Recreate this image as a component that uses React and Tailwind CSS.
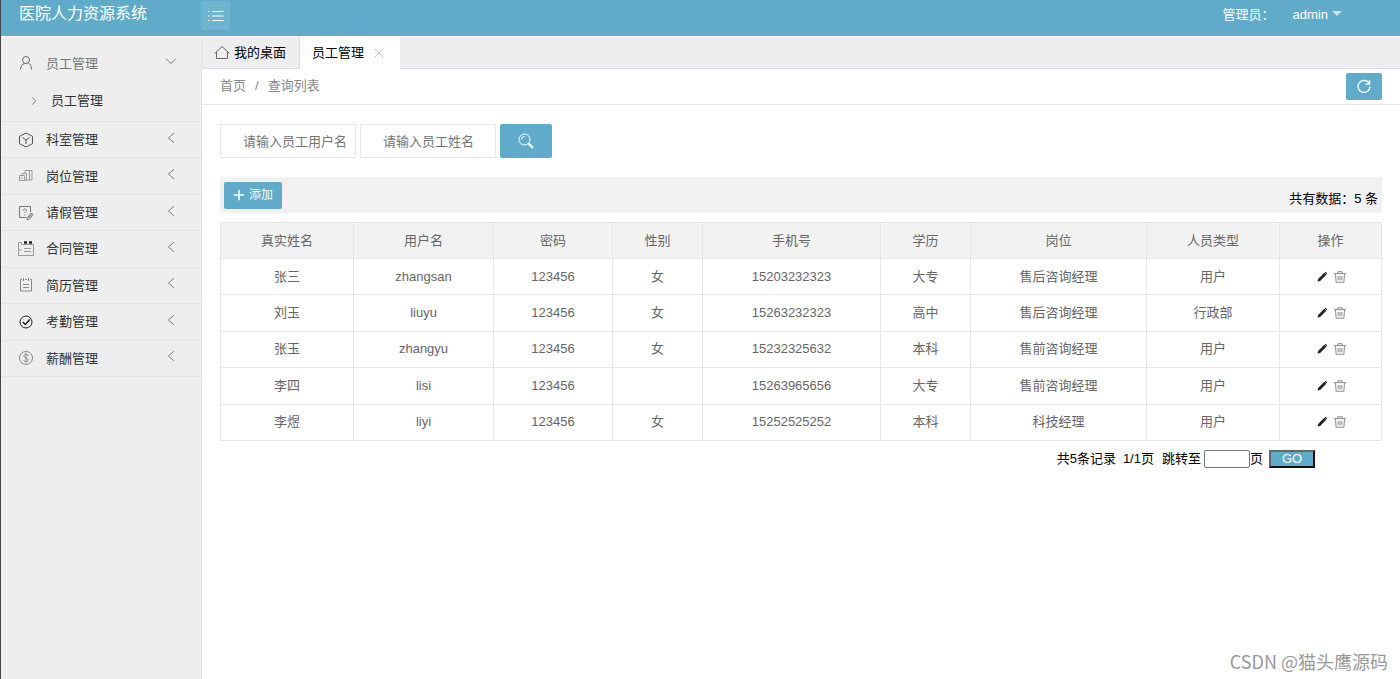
import React, { useState } from "react";

const menus = [
  { id: "dept", name: "科室管理" },
  { id: "post", name: "岗位管理" },
  { id: "leave", name: "请假管理" },
  { id: "contract", name: "合同管理" },
  { id: "resume", name: "简历管理" },
  { id: "attendance", name: "考勤管理" },
  { id: "salary", name: "薪酬管理" },
];

const columns = ["真实姓名", "用户名", "密码", "性别", "手机号", "学历", "岗位", "人员类型", "操作"];

const employees = [
  ["张三", "zhangsan", "123456", "女", "15203232323", "大专", "售后咨询经理", "用户"],
  ["刘玉", "liuyu", "123456", "女", "15263232323", "高中", "售后咨询经理", "行政部"],
  ["张玉", "zhangyu", "123456", "女", "15232325632", "本科", "售前咨询经理", "用户"],
  ["李四", "lisi", "123456", "", "15263965656", "大专", "售前咨询经理", "用户"],
  ["李煜", "liyi", "123456", "女", "15252525252", "本科", "科技经理", "用户"],
];

function Icon({ children, className = "size-4", width = 1 }) {
  return (
    <svg
      viewBox="0 0 16 16"
      className={className}
      fill="none"
      stroke="currentColor"
      strokeWidth={width}
      aria-hidden="true"
    >
      {children}
    </svg>
  );
}

function MenuIcon({ id }) {
  switch (id) {
    case "dept":
      return (
        <Icon className="size-4 text-[#555]">
          <path d="M8 1 14.5 4.3v7.4L8 15l-6.500-3.300V4.300zM4.500 5.500 8 8l3.500-2.500M8 8v4" />
        </Icon>
      );
    case "post":
      return (
        <Icon className="size-4 text-[#999]">
          <path d="M1.500 7.500h5v5h-5zM4 7.500v-2h4.500v7H6.500M3 10h2M7 5.500v-3h7v9.500H8.500M11.500 2.500v9.500" />
        </Icon>
      );
    case "leave":
      return (
        <Icon className="size-4 text-[#777]">
          <path d="M12.500 7V1.500h-11v11h7M5 5.500c0-2 3.500-2 3.500 0 0 1.300-1.700 1.300-1.700 2.500M6.800 9.500v1" />
          <path d="m9 13.500 4-5.500 2 1.500-4 5H9zM10.500 13l3-3.500" />
        </Icon>
      );
    case "contract":
      return (
        <Icon className="size-4 text-[#999]">
          <path d="M.5 1.500h3v2h12v11H.5zM1 9h3M6 7.500h7M6 10.500h7" />
          <path d="M6 1.500h3M11 1.500h3" stroke="#222" strokeWidth="2.5" />
        </Icon>
      );
    case "resume":
      return (
        <Icon className="size-4 text-[#888]">
          <path d="M4 2.500H2.500v11.500h11V2.500H12M7 2.500h2M5.500 1v3M10.500 1v3M5 7.500h6M5 10.500h6" />
        </Icon>
      );
    case "attendance":
      return (
        <Icon className="size-4 text-[#222]">
          <circle cx="8" cy="8" r="6" />
          <path d="m4.800 8 2.500 2.500 4.500-5" strokeWidth="1.5" />
        </Icon>
      );
    default:
      return (
        <Icon className="size-4 text-[#888]">
          <circle cx="8" cy="8" r="6.5" />
          <path d="M10.300 6c0-2.300-4.500-2.300-4.500 0s4.500 1.700 4.500 4-4.500 2.300-4.500 0M8 3.300v9.400" />
        </Icon>
      );
  }
}

function Sidebar() {
  const [open, setOpen] = useState(true);

  return (
    <nav className="w-[201px] shrink-0 border-r border-[#e2e2e2] bg-[#eee] pt-2 text-[#333]">
      <button
        className="flex h-9 w-full items-center pr-6 pl-[17px] text-[#777]"
        onClick={() => setOpen(!open)}
      >
        <Icon className="size-4 text-[#666]">
          <circle cx="8" cy="5" r="3.5" />
          <path d="M2.500 14.500c.3-3.500 1.800-5.500 4-6M10.500 8c1.800 1 2.800 3 3 6.500" />
        </Icon>
        <span className="ml-3 flex-1 pt-px text-left">员工管理</span>
        <Icon className="mb-1 size-3 text-[#777]" width={1.3}>
          <path d="m1.500 5 6.500 6.500L14.500 5" />
        </Icon>
      </button>
      {open && (
        <a href="#employees" className="flex h-10 items-center pl-7">
          <Icon className="size-3 text-[#777]" width={1.3}>
            <path d="m4 3 5 5-5 5" />
          </Icon>
          <span className="ml-2.5">员工管理</span>
        </a>
      )}
      {/* collapsed groups */}
      <ul className="grid h-64 auto-rows-fr border-b border-[#e4e4e4]">
        {menus.map((m) => (
          <li key={m.id} className="border-t border-[#e4e4e4]">
            <button className="flex h-full w-full items-center pr-6 pl-[17px]">
              <MenuIcon id={m.id} />
              <span className="ml-3 flex-1 pt-px text-left">{m.name}</span>
              <Icon className="mb-1 size-3 text-[#777]" width={1.3}>
                <path d="M12 1.500 4.500 8l7.500 6.500" />
              </Icon>
            </button>
          </li>
        ))}
      </ul>
    </nav>
  );
}

function EmployeeTable() {
  return (
    <table className="mt-[9px] h-[219px] w-full table-fixed border-collapse text-center text-[#666]">
      <colgroup>
        <col className="w-[133px]" />
        <col className="w-[140px]" />
        <col className="w-[119px]" />
        <col className="w-[90px]" />
        <col className="w-[178px]" />
        <col className="w-[90px]" />
        <col className="w-[176px]" />
        <col className="w-[133px]" />
        <col className="w-[102px]" />
      </colgroup>
      <thead>
        <tr className="h-9 bg-[#f2f2f2]">
          {columns.map((c) => (
            <th key={c} className="border border-[#e6e6e6] font-normal">
              {c}
            </th>
          ))}
        </tr>
      </thead>
      <tbody>
        {employees.map((row) => (
          <tr key={row[1]} className="h-9">
            {row.map((cell, i) => (
              <td key={i} className="border border-[#e6e6e6]">
                {cell}
              </td>
            ))}
            <td className="border border-[#e6e6e6]">
              <div className="flex items-center justify-center gap-1.5">
                <button aria-label="编辑" className="text-[#222]">
                  <Icon className="size-3">
                    <path d="m2 14 .8-3.500L11 2.300l2.700 2.700-8.200 8.200z" fill="currentColor" stroke="none" />
                    <path d="m12 1.500 2.500 2.500" strokeWidth="1.5" />
                  </Icon>
                </button>
                <button aria-label="删除" className="text-[#888]">
                  <Icon className="size-3" width={1.3}>
                    <path d="M0 3.500h16M5 3V1h6v2M2 4l.8 11h10.400L14 4M5.500 6.500v6M8 6.500v6M10.500 6.500v6" />
                  </Icon>
                </button>
              </div>
            </td>
          </tr>
        ))}
      </tbody>
    </table>
  );
}

export default function App() {
  const [username, setUsername] = useState("");
  const [realName, setRealName] = useState("");
  const [page, setPage] = useState("");

  return (
    <div className="flex min-h-screen flex-col border-l border-[#444] bg-white font-['Liberation_Sans','Noto_Sans_CJK_SC',sans-serif] text-[13px] leading-5 text-black">
      <header className="flex h-9 items-start bg-[#5fabc9] text-white">
        <h1 className="w-[200px] pt-0.5 pl-[18px] text-base">医院人力资源系统</h1>
        <button
          aria-label="菜单"
          className="mt-px flex h-[29px] w-[29px] items-center justify-center bg-[#6fb4cf]"
        >
          <Icon width={1.2}>
            <path d="M4 3.500h11.500M4 8h11.500M4 12.500h11.500M.5 3.500H2M.5 8H2M.5 12.500H2" />
          </Icon>
        </button>
        <div className="ml-auto flex pt-[5px] pr-[58px]">
          <span>管理员：</span>
          <button className="ml-[18px] flex items-center">
            admin
            <svg viewBox="0 0 10 5" className="mb-1 ml-1 h-[5px] w-2.5 fill-[#c8e4ef]" aria-hidden="true">
              <path d="M0 0h10L5 5z" />
            </svg>
          </button>
        </div>
      </header>

      <div className="flex flex-1 pt-px">
        <Sidebar />
        <main className="relative min-w-0 flex-1">
          {/* tabs */}
          <div className="flex h-8 border-b border-[#ddd] bg-[#eeeef0]">
            <button className="flex w-[98px] items-center gap-1 border-r border-[#ddd] pl-3">
              <Icon className="size-4 text-[#666]">
                <path d="M.5 8.500 8 1.500l7.500 7M2.500 7v6.500h11V7" />
              </Icon>
              我的桌面
            </button>
            <div className="-mb-px flex w-[100px] items-center bg-white pl-3">
              员工管理
              <button aria-label="关闭" className="ml-2.5 text-[#bbb]">
                <Icon className="size-2.5" width={1.5}>
                  <path d="m1 1 14 14M15 1 1 15" />
                </Icon>
              </button>
            </div>
          </div>

          <div className="flex h-9 items-center border-b border-[#e6e6e6] px-[18px] pb-px text-[#888]">
            <a href="#home">首页</a>
            <span className="mx-[9px]">/</span>
            <a href="#list">查询列表</a>
            <button
              aria-label="刷新"
              className="ml-auto flex h-[27px] w-9 items-center justify-center rounded-xs bg-[#5fabc9] text-white"
            >
              <Icon width={1.3}>
                <path d="M13.500 6A6 6 0 1 0 14 8.500M13.500 2v4.200H9.500" />
              </Icon>
            </button>
          </div>

          <div className="px-[18px] pt-[19px]">
            <form className="flex gap-1" onSubmit={(e) => e.preventDefault()}>
              <input
                aria-label="员工用户名"
                className="h-[34px] w-[136px] border border-[#e6e6e6] pl-[22px] placeholder:text-[#757575]"
                placeholder="请输入员工用户名"
                value={username}
                onChange={(e) => setUsername(e.target.value)}
              />
              <input
                aria-label="员工姓名"
                className="h-[34px] w-[136px] border border-[#e6e6e6] pl-[22px] placeholder:text-[#757575]"
                placeholder="请输入员工姓名"
                value={realName}
                onChange={(e) => setRealName(e.target.value)}
              />
              <button
                aria-label="搜索"
                className="flex h-[34px] w-[52px] items-center justify-center rounded-xs bg-[#5fabc9] text-white"
              >
                <Icon>
                  <circle cx="6.5" cy="6.5" r="5.5" />
                  <path d="M3.500 6.500a3 3 0 0 1 3-3" />
                  <path d="m10.500 10.500 4.500 4.500" strokeWidth="2.2" />
                </Icon>
              </button>
            </form>

            <div className="mt-[19px] flex h-9 items-center justify-between bg-[#f1f1f1] px-1">
              <button className="flex h-[27px] w-[58px] items-center justify-center gap-1 rounded-xs bg-[#5fabc9] text-xs text-white">
                <Icon className="size-3" width={2}>
                  <path d="M8 1v14M1 8h14" />
                </Icon>
                添加
              </button>
              <span className="pt-2">共有数据：5 条</span>
            </div>

            <EmployeeTable />

            <div className="mt-2 flex items-center justify-end pr-[67px]">
              <span>共5条记录</span>
              <span className="ml-[7px]">1/1页</span>
              <label htmlFor="page" className="ml-2">
                跳转至
              </label>
              <input
                id="page"
                className="ml-[3px] h-[18px] w-[46px] rounded-xs border border-[#767676] px-1"
                value={page}
                onChange={(e) => setPage(e.target.value)}
              />
              <span>页</span>
              <button className="ml-1.5 flex h-[18px] w-[46px] items-center justify-center border-2 border-t-[#666] border-r-[#111] border-b-[#111] border-l-[#666] bg-[#5fabc9] text-white">
                GO
              </button>
            </div>
          </div>

          <div className="absolute right-3 bottom-1.5 font-['Noto_Sans_CJK_SC',sans-serif] text-lg leading-6 text-[#999]">
            CSDN @猫头鹰源码
          </div>
        </main>
      </div>
    </div>
  );
}
